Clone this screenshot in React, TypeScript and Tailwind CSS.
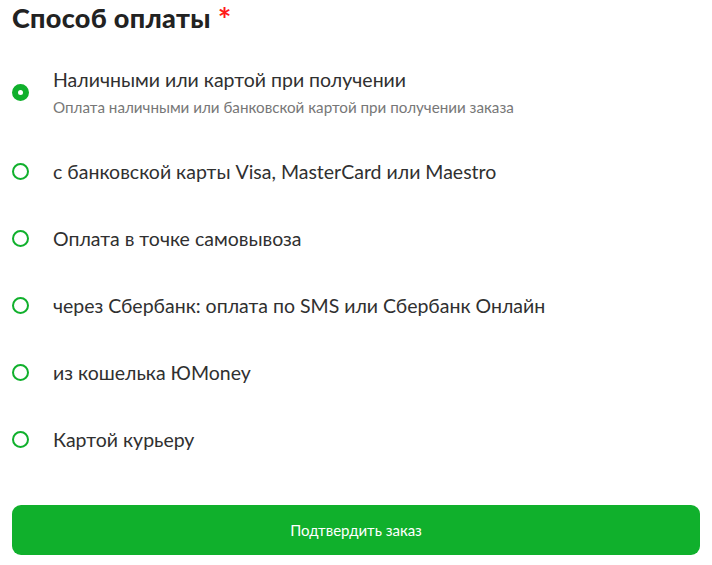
import { useState } from "react";

const methods = [
  { id: "cash", title: "Наличными или картой при получении", hint: "Оплата наличными или банковской картой при получении заказа" },
  { id: "card", title: "с банковской карты Visa, MasterCard или Maestro" },
  { id: "pickup", title: "Оплата в точке самовывоза" },
  { id: "sber", title: "через Сбербанк: оплата по SMS или Сбербанк Онлайн" },
  { id: "yoomoney", title: "из кошелька ЮMoney" },
  { id: "courier", title: "Картой курьеру" },
];

export default function App() {
  const [selected, setSelected] = useState("cash");

  return (
    <div className="w-[712px] h-[565px] bg-white px-3 font-['Lato',sans-serif] text-[#303030]">
      <h2 className="flex h-[46px] items-start pt-[2px] text-[27px] font-black leading-[32px] tracking-[0.3px] text-[#222]">
        Способ оплаты
        <span className="ml-[7px] mt-[2px] text-[32px] font-bold leading-[32px] text-[#ff1a1a]">*</span>
      </h2>

      <div className="flex flex-col">
        {methods.map((m) => {
          const active = selected === m.id;
          return (
            <label
              key={m.id}
              onClick={() => setSelected(m.id)}
              className={`flex cursor-pointer items-center ${m.hint ? "h-[92px]" : "h-[67px]"}`}
            >
              <span
                className={`flex h-[17px] w-[17px] shrink-0 items-center justify-center rounded-full border-2 border-[#10b02c] ${
                  active ? "bg-[#10b02c]" : "bg-white"
                }`}
              >
                {active && <span className="h-[5px] w-[5px] rounded-full bg-white" />}
              </span>
              <span className="ml-[24px] flex flex-col">
                <span className="text-[19.5px] leading-[22px]">{m.title}</span>
                {m.hint && <span className="mt-[8px] text-[15.2px] leading-[16px] text-[#777]">{m.hint}</span>}
              </span>
            </label>
          );
        })}
      </div>

      <button className="mt-[32px] flex h-[50px] w-full items-center justify-center rounded-[9px] bg-[#10b02c] text-[15px] text-white">
        Подтвердить заказ
      </button>
    </div>
  );
}
